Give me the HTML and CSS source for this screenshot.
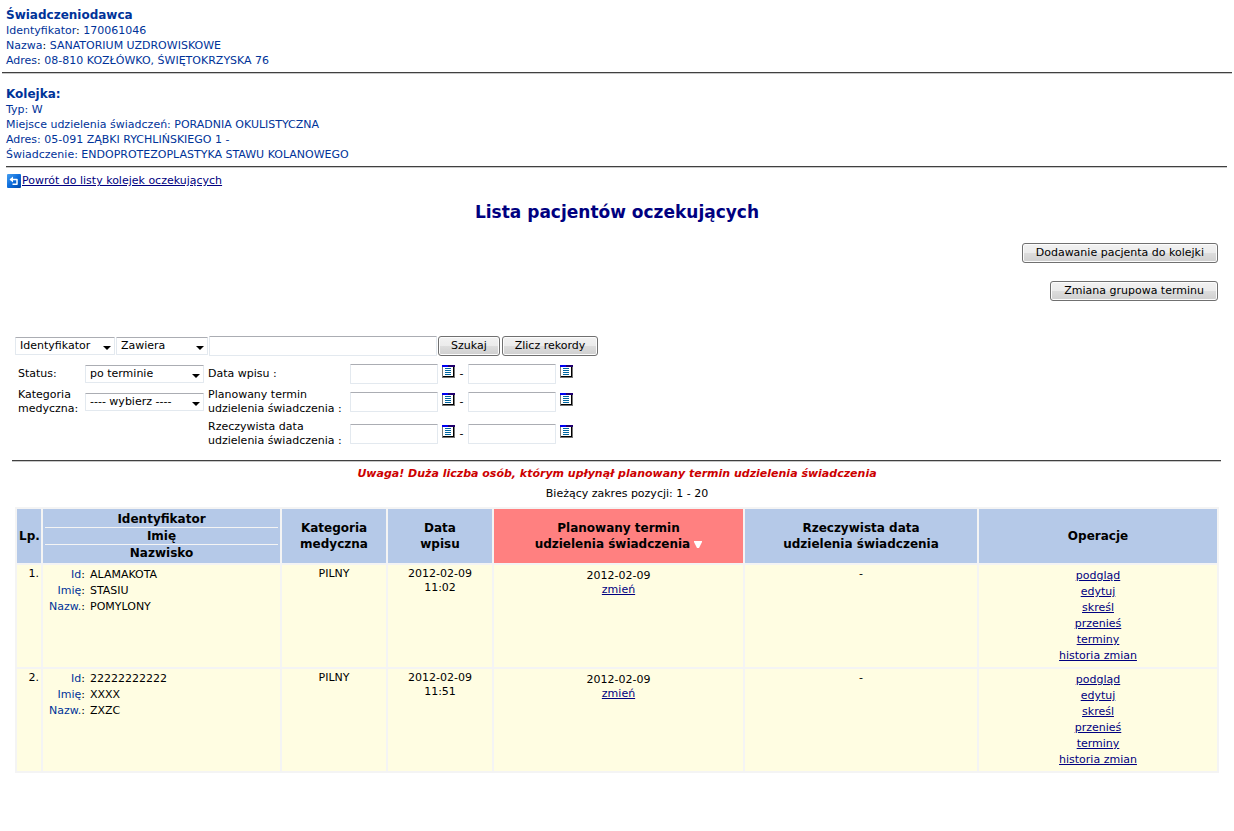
FILE: index.html
```html
<!DOCTYPE html>
<html lang="pl">
<head>
<meta charset="utf-8">
<title>Lista pacjentów oczekujących</title>
<link rel="stylesheet" href="styles.css">
</head>
<body>
<svg class="defs" aria-hidden="true">
  <symbol id="cal" viewBox="0 0 13 13">
    <rect width="13" height="13" fill="#000"/>
    <path d="M0 1h1v11H0zM0 12h13v1H0zM12 1h1v12h-1z" fill="#777"/>
    <path d="M1 2h10v9H1z" fill="#fff"/>
    <path d="M0 0h6v2H0z" fill="#0000f0"/><path d="M6 0h7v2H6z" fill="#200070"/>
    <path d="M3 3h6v1H3zM3 5h6v1H3zM3 7h6v1H3zM3 9h6v1H3z" fill="#0066a0"/>
  </symbol>
</svg>
<header class="provider">
  <h2>Świadczeniodawca</h2>
  <p>Identyfikator<b>:</b> 170061046</p>
  <p>Nazwa<b>:</b> SANATORIUM UZDROWISKOWE</p>
  <p>Adres<b>:</b> 08-810 KOZŁÓWKO, ŚWIĘTOKRZYSKA 76</p>
</header>
<section class="queue">
  <h2>Kolejka:</h2>
  <p>Typ: W</p>
  <p>Miejsce udzielenia świadczeń: PORADNIA OKULISTYCZNA</p>
  <p>Adres: 05-091 ZĄBKI RYCHLIŃSKIEGO 1 -</p>
  <p>Świadczenie: ENDOPROTEZOPLASTYKA STAWU KOLANOWEGO</p>
</section>
<main>
  <div class="back">
    <svg width="14" height="14" viewBox="0 0 14 14" aria-hidden="true">
      <defs><linearGradient id="g" x1="0" y1="0" x2="1" y2="1"><stop offset="0" stop-color="#48a0f0"/><stop offset=".5" stop-color="#0c6cdc"/><stop offset="1" stop-color="#0048a8"/></linearGradient></defs>
      <rect width="14" height="14" rx="1" fill="url(#g)"/>
      <path d="M3.500 5.500H10V10.300H5.500" fill="none" stroke="#fff" stroke-width="1.500" stroke-linejoin="round"/>
      <path d="M2.500 5.500L6 2.500V8.500z" fill="#fff"/>
    </svg>
    <a href="#">Powrót do listy kolejek oczekujących</a>
  </div>
  <h1>Lista pacjentów oczekujących</h1>
  <div class="actions">
    <button type="button">Dodawanie pacjenta do kolejki</button>
    <button type="button">Zmiana grupowa terminu</button>
  </div>
  <form class="filters">
    <div class="search">
      <span class="pick field"><select aria-label="Pole"><option>Identyfikator</option></select></span>
      <span class="pick mode"><select aria-label="Warunek"><option>Zawiera</option></select></span>
      <input class="query" type="text" aria-label="Szukany tekst">
      <button type="button">Szukaj</button>
      <button type="button">Zlicz rekordy</button>
    </div>
    <div class="criteria">
      <label for="status">Status:</label>
      <span class="pick"><select id="status"><option>po terminie</option></select></span>
      <label for="d1">Data wpisu :</label>
      <div class="range"><input id="d1" type="text"><svg class="cal"><use href="#cal"/></svg><span>-</span><input type="text" aria-label="Data wpisu do"><svg class="cal"><use href="#cal"/></svg></div>
      <label for="kat">Kategoria<br>medyczna:</label>
      <span class="pick"><select id="kat"><option>---- wybierz ----</option></select></span>
      <label for="d2">Planowany termin<br>udzielenia świadczenia :</label>
      <div class="range"><input id="d2" type="text"><svg class="cal"><use href="#cal"/></svg><span>-</span><input type="text" aria-label="Planowany termin do"><svg class="cal"><use href="#cal"/></svg></div>
      <label class="third" for="d3">Rzeczywista data<br>udzielenia świadczenia :</label>
      <div class="range"><input id="d3" type="text"><svg class="cal"><use href="#cal"/></svg><span>-</span><input type="text" aria-label="Rzeczywista data do"><svg class="cal"><use href="#cal"/></svg></div>
    </div>
  </form>
  <section class="results">
    <p class="warning">Uwaga! Duża liczba osób, którym upłynął planowany termin udzielenia świadczenia</p>
    <p class="count">Bieżący zakres pozycji: 1 - 20</p>
    <table class="patients">
      <colgroup><col class="c-no"><col class="c-person"><col class="c-cat"><col class="c-date"><col class="c-plan"><col class="c-real"><col class="c-ops"></colgroup>
      <thead><tr>
        <th>Lp.</th>
        <th class="stack"><div>Identyfikator</div><div>Imię</div><div>Nazwisko</div></th>
        <th>Kategoria<br>medyczna</th>
        <th>Data<br>wpisu</th>
        <th class="sorted">Planowany termin<br>udzielenia świadczenia <svg width="8" height="7" viewBox="0 0 8 7" aria-hidden="true"><path d="M0 0h8v1L5 7H3L0 1z" fill="#fff"/></svg></th>
        <th>Rzeczywista data<br>udzielenia świadczenia</th>
        <th>Operacje</th>
      </tr></thead>
      <tbody>
        <tr>
          <td class="no">1.</td>
          <td class="person"><dl><dt>Id<b>:</b></dt><dd>ALAMAKOTA</dd><dt>Imię<b>:</b></dt><dd>STASIU</dd><dt>Nazw.<b>:</b></dt><dd>POMYLONY</dd></dl></td>
          <td>PILNY</td>
          <td>2012-02-09<br>11:02</td>
          <td class="plan">2012-02-09<br><a href="#">zmień</a></td>
          <td>-</td>
          <td class="ops"><a href="#">podgląd</a><br><a href="#">edytuj</a><br><a href="#">skreśl</a><br><a href="#">przenieś</a><br><a href="#">terminy</a><br><a href="#">historia zmian</a></td>
        </tr>
        <tr>
          <td class="no">2.</td>
          <td class="person"><dl><dt>Id<b>:</b></dt><dd>22222222222</dd><dt>Imię<b>:</b></dt><dd>XXXX</dd><dt>Nazw.<b>:</b></dt><dd>ZXZC</dd></dl></td>
          <td>PILNY</td>
          <td>2012-02-09<br>11:51</td>
          <td class="plan">2012-02-09<br><a href="#">zmień</a></td>
          <td>-</td>
          <td class="ops"><a href="#">podgląd</a><br><a href="#">edytuj</a><br><a href="#">skreśl</a><br><a href="#">przenieś</a><br><a href="#">terminy</a><br><a href="#">historia zmian</a></td>
        </tr>
      </tbody>
    </table>
  </section>
</main>
</body>
</html>
```
FILE: styles.css
```css
* { box-sizing: border-box; }
body {
  margin: 0;
  background: #fff;
  color: #000;
  font: 11px/14px Verdana, "DejaVu Sans", sans-serif;
}
h1, h2, p, dl, dd { margin: 0; }
a { color: #000080; text-decoration: underline; }
.defs { display: none; }

.provider, .queue { color: #003399; line-height: 15px; border-bottom: 1px solid #404040; box-shadow: 0 1px #c8c8c8; }
.provider { margin: 0 2px; padding: 7px 4px 4px; }
.provider b { color: #000; font-weight: normal; }
.queue { margin: 0 7px 0 6px; padding: 13px 0 4px; }
h2 { font-size: 12px; line-height: 16px; }

.back { display: flex; align-items: center; gap: 1px; padding: 7px 7px 0; }
h1 { padding-top: 12px; font-size: 17px; line-height: 24px; text-align: center; color: #000080; }

button {
  height: 20px;
  padding: 0 11px;
  border: 1px solid #707070;
  border-radius: 3px;
  background: linear-gradient(#f2f2f2, #ebebeb 50%, #dddddd 50%, #cfcfcf);
  box-shadow: inset 0 0 0 1px #fcfcfc;
  color: #000;
  font: inherit;
}
.actions { display: flex; flex-direction: column; align-items: flex-end; gap: 18px; padding: 19px 16px 0; }
.actions button { padding: 0 13px; }

input, select {
  height: 20px;
  border: 1px solid #e3e9ef;
  border-top-color: #abadb3;
  border-radius: 1px;
  background: #fff;
  color: #000;
  font: inherit;
}
select { appearance: none; width: 100%; height: 18px; padding: 0 4px; }
.pick { display: flex; position: relative; }
.pick::after {
  content: "";
  position: absolute;
  right: 4px;
  top: 9px;
  border: 4px solid transparent;
  border-top-color: #000;
  border-bottom: 0;
  pointer-events: none;
}

.filters { margin: 0 13px 0 12px; padding: 35px 3px 8px; border-bottom: 1px solid #404040; box-shadow: 0 1px #c8c8c8; }
.search { display: flex; align-items: center; gap: 1px; }
.search button { padding: 0 12px; }
.search button + button { margin-left: 1px; }
.field { width: 100px; }
.mode { width: 92px; }
.query { width: 228px; }
.criteria {
  display: grid;
  grid-template-columns: 67px 119px 139px 1fr;
  grid-template-rows: 28px 28px 36px;
  align-items: center;
  padding: 4px 0 0 3px;
}
.criteria label { white-space: nowrap; }
.criteria label:nth-of-type(even), .criteria .third { padding-left: 4px; }
.third { grid-column: 3; }
.range { display: flex; align-items: center; gap: 4px; padding-left: 7px; }
.range input { width: 88px; }
.range span { width: 5px; text-align: center; }
.cal { width: 13px; height: 13px; margin-bottom: 5px; }

.warning { padding-top: 6px; text-align: center; font-weight: bold; font-style: italic; color: #cc0000; }
.count { padding: 6px 0 6px 20px; text-align: center; }
.results { margin: 0 15px; }
.patients { width: 100%; table-layout: fixed; border-collapse: collapse; border: 2px solid #f4f4f4; }
.patients th, .patients td { border: 2px solid #f4f4f4; padding: 2px; text-align: center; }
.patients th { height: 56px; background: #b5c9e8; font-size: 12px; line-height: 16px; white-space: nowrap; }
.patients th.sorted { background: #ff8080; }
.patients td { background: #fffde2; vertical-align: top; }
.stack div + div { border-top: 1px solid #f4f4f4; }
.c-no { width: 26px; }
.c-person { width: 239px; }
.c-cat, .c-date { width: 106px; }
.c-plan { width: 251px; }
.c-real { width: 234px; }
.patients .no { text-align: right; }
.person dl { display: grid; grid-template-columns: 40px 1fr; column-gap: 5px; line-height: 16px; text-align: left; }
.person dt { text-align: right; color: #003399; }
.person dt b { color: #000; font-weight: normal; }
.patients .plan { padding-top: 4px; }
.patients .ops { padding-top: 3px; padding-bottom: 3px; line-height: 16px; }
```
